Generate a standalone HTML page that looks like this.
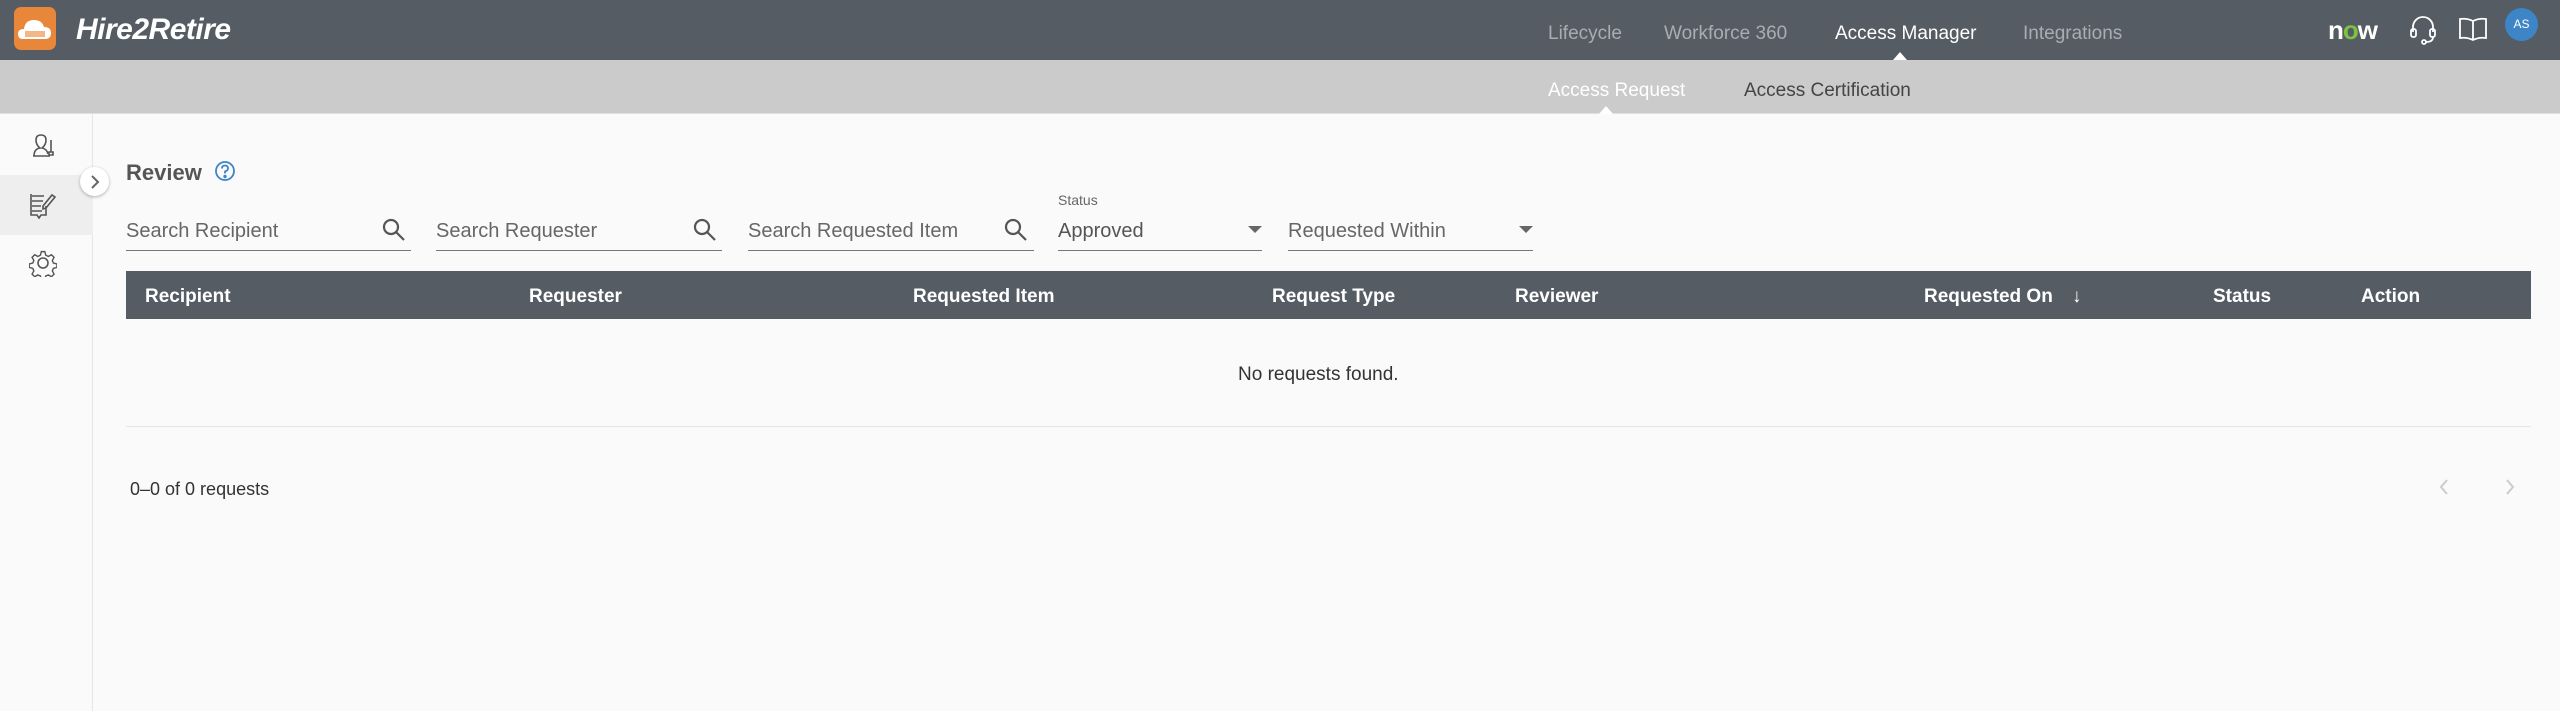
<!DOCTYPE html>
<html><head><meta charset="utf-8"><style>
*{margin:0;padding:0;box-sizing:border-box}
body{width:2560px;height:711px;background:#fafafa;font-family:"Liberation Sans",Arial,sans-serif;position:relative;overflow:hidden;color:#333}
.a{position:absolute;white-space:nowrap}
.hdr{position:absolute;left:0;top:0;width:2560px;height:60px;background:#555c64}
.sub{position:absolute;left:0;top:60px;width:2560px;height:54px;background:#cbcbcb;border-bottom:1px solid #e0e0e0}
.nav{font-size:19px;color:#a9adb2;top:23px}
.side{position:absolute;left:0;top:114px;width:93px;height:597px;border-right:1px solid #e6e6e6;background:#fafafa}
.fld{position:absolute;top:214px;height:37px;border-bottom:1.5px solid #777;font-size:20px;color:#666}
.fld span{position:absolute;left:0;top:6px}
.th{position:absolute;left:126px;top:271px;width:2405px;height:48px;background:#555c64}
.th span{position:absolute;top:15px;color:#fff;font-weight:bold;font-size:19px}
.tri{position:absolute;width:0;height:0;border-left:7px solid transparent;border-right:7px solid transparent;border-top:7px solid #666}
</style></head><body>
<div class="hdr"></div>
<div class="a" style="left:14px;top:7px;width:42px;height:43px;background:#e8873a;border-radius:7px"></div>
<svg class="a" style="left:14px;top:7px" width="42" height="43"><path d="M9 32 Q4 32 4 27 Q4 22 10 22 Q11 13 20 13 Q28 13 30 20 Q37 20 37 26 Q37 32 31 32Z" fill="#fff"/><rect x="11" y="24" width="20" height="6" fill="#e8873a" opacity=".6"/></svg>
<div class="a" style="left:76px;top:13px;font-size:30px;font-weight:bold;font-style:italic;color:#fff;letter-spacing:-0.5px">Hire2Retire</div>
<div class="a nav" style="left:1548px">Lifecycle</div>
<div class="a nav" style="left:1664px">Workforce 360</div>
<div class="a nav" style="left:1835px;color:#fff">Access Manager</div>
<div class="a nav" style="left:2023px">Integrations</div>
<div class="a" style="left:1893px;top:52px;border-left:7px solid transparent;border-right:7px solid transparent;border-bottom:8px solid #fff"></div>
<div class="a" style="left:2328px;top:15px;font-size:26px;font-weight:bold;color:#fff;letter-spacing:-1px">n<span style="color:#7ec242">o</span>w</div>
<svg class="a" style="left:2408px;top:14px" width="30" height="32" fill="none" stroke="#fff" stroke-width="1.8"><path d="M5 18 V13 A10 10 0 0 1 25 13 V18"/><rect x="3" y="15" width="5" height="8" rx="2"/><rect x="22" y="15" width="5" height="8" rx="2"/><path d="M25 23 Q25 28 18 28"/><circle cx="16" cy="28" r="2"/></svg>
<svg class="a" style="left:2458px;top:16px" width="30" height="26" fill="none" stroke="#fff" stroke-width="1.8"><path d="M15 5 Q9 2 2 3 V22 Q9 21 15 24 Q21 21 28 22 V3 Q21 2 15 5Z M15 5 V24"/></svg>
<div class="a" style="left:2505px;top:8px;width:33px;height:33px;border-radius:50%;background:#3d85c6;color:#fff;font-size:12px;text-align:center;line-height:33px">AS</div>
<div class="sub"></div>
<div class="a" style="left:1548px;top:80px;font-size:19px;color:#fff">Access Request</div>
<div class="a" style="left:1744px;top:80px;font-size:19px;color:#444">Access Certification</div>
<div class="a" style="left:1599px;top:106px;border-left:7px solid transparent;border-right:7px solid transparent;border-bottom:8px solid #fff"></div>
<div class="side"></div>
<div class="a" style="left:0;top:175px;width:93px;height:60px;background:#eeeeee"></div>
<svg class="a" style="left:30px;top:132px" width="28" height="26" fill="none" stroke="#555" stroke-width="1.6"><path d="M3 24 H20 M4 24 Q4 17 10 16 Q6 13 6 8 Q6 3 11 3 Q16 3 16 8 Q16 13 12 16 Q17 17 18 22"/><path d="M21 8 V20 M19 20 h4 v3 h-4z"/></svg>
<svg class="a" style="left:29px;top:191px" width="28" height="28" fill="none" stroke="#555" stroke-width="1.6"><path d="M3 5 H15 M3 10 H14 M3 15 H12 M3 20 H13 M2 3 V24 H8 L10 27 L12 24 H17 V15 M14 15 L23 4 L26 6 L17 17 L14 18Z"/></svg>
<svg class="a" style="left:29px;top:249px" width="28" height="28" fill="none" stroke="#555" stroke-width="1.6"><circle cx="14" cy="14" r="5"/><path d="M12 2 h4 l1 4 l3 1.5 l3.5-2 l3 3 l-2 3.5 l1.2 3 l4 1 v4 l-4 1 l-1.2 3 l2 3.5 l-3 3 l-3.5-2 l-3 1.2 l-1 4 h-4 l-1-4 l-3-1.2 l-3.5 2 l-3-3 l2-3.5 l-1.2-3 l-4-1 v-4 l4-1 l1.2-3 l-2-3.5 l3-3 l3.5 2 l3-1.5z" transform="scale(0.88) translate(2 1)"/></svg>
<div class="a" style="left:80px;top:167px;width:29px;height:29px;border-radius:50%;background:#fff;box-shadow:0 1px 3px rgba(0,0,0,.3)"></div>
<svg class="a" style="left:89px;top:174px" width="12" height="16" fill="none" stroke="#666" stroke-width="2"><path d="M3 2 L9 8 L3 14"/></svg>
<div class="a" style="left:126px;top:160px;font-size:22px;font-weight:bold;color:#555">Review</div>
<svg class="a" style="left:214px;top:160px" width="22" height="22" fill="none" stroke="#3d85c6" stroke-width="1.8"><circle cx="11" cy="11" r="9"/><path d="M8 8.5 Q8 5.5 11 5.5 Q14 5.5 14 8.5 Q14 10.5 11 11.5 V13.5"/><circle cx="11" cy="16.5" r=".8" fill="#3d85c6"/></svg>
<div class="fld" style="left:126px;width:285px"><span>Search Recipient</span></div>
<div class="fld" style="left:436px;width:286px"><span>Search Requester</span></div>
<div class="fld" style="left:748px;width:286px"><span>Search Requested Item</span></div>
<div class="fld" style="left:1058px;width:204px"><span style="color:#555">Approved</span></div>
<div class="fld" style="left:1288px;width:245px"><span>Requested Within</span></div>
<svg class="a" style="left:381px;top:217px" width="26" height="26" fill="none" stroke="#555" stroke-width="2.2"><circle cx="10" cy="10" r="7"/><path d="M15 15 L23 23"/></svg>
<svg class="a" style="left:692px;top:217px" width="26" height="26" fill="none" stroke="#555" stroke-width="2.2"><circle cx="10" cy="10" r="7"/><path d="M15 15 L23 23"/></svg>
<svg class="a" style="left:1003px;top:217px" width="26" height="26" fill="none" stroke="#555" stroke-width="2.2"><circle cx="10" cy="10" r="7"/><path d="M15 15 L23 23"/></svg>
<div class="a" style="left:1058px;top:192px;font-size:14px;color:#666">Status</div>
<div class="tri" style="left:1248px;top:226px"></div>
<div class="tri" style="left:1519px;top:226px"></div>
<div class="th">
<span style="left:19px">Recipient</span>
<span style="left:403px">Requester</span>
<span style="left:787px">Requested Item</span>
<span style="left:1146px">Request Type</span>
<span style="left:1389px">Reviewer</span>
<span style="left:1798px">Requested On</span>
<span style="left:1946px;font-weight:normal">&#8595;</span>
<span style="left:2087px">Status</span>
<span style="left:2235px">Action</span>
</div>
<div class="a" style="left:1238px;top:364px;font-size:19px;color:#333">No requests found.</div>
<div class="a" style="left:126px;top:426px;width:2405px;height:1px;background:#e6e6e6"></div>
<div class="a" style="left:130px;top:479px;font-size:18px;color:#333">0–0 of 0 requests</div>
<svg class="a" style="left:2437px;top:477px" width="14" height="20" fill="none" stroke="#ccc" stroke-width="2"><path d="M10 3 L4 10 L10 17"/></svg>
<svg class="a" style="left:2503px;top:477px" width="14" height="20" fill="none" stroke="#ccc" stroke-width="2"><path d="M4 3 L10 10 L4 17"/></svg>
</body></html>
